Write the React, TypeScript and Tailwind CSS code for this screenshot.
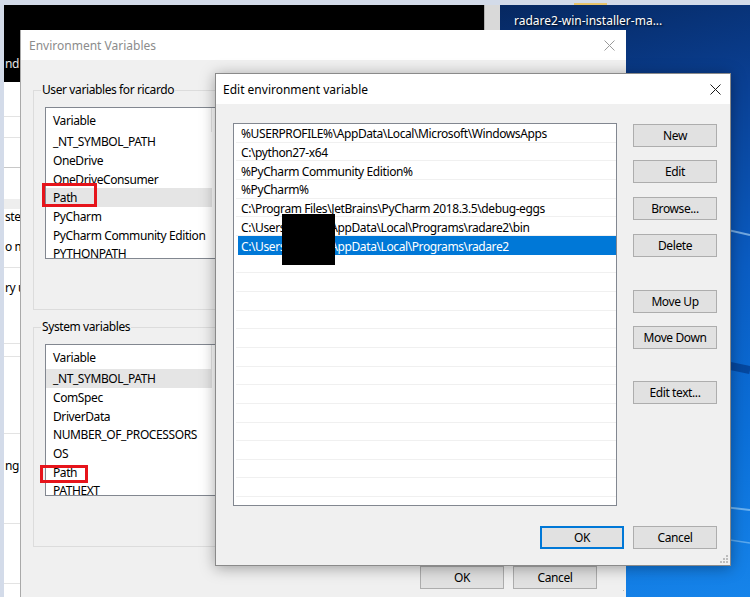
import React from "react";

const FONT = "font-['Segoe_UI','Noto_Sans',sans-serif]";

function CloseX({ color }: { color: string }) {
  return (
    <svg width="11" height="11" viewBox="0 0 11 11">
      <path d="M0.5 0.5 L10.5 10.5 M10.5 0.5 L0.5 10.5" stroke={color} strokeWidth="1" fill="none" />
    </svg>
  );
}

function Btn({ label, focused = false }: { label: string; focused?: boolean }) {
  return (
    <div
      className={
        focused
          ? "flex h-[23px] w-[84px] items-center justify-center border-2 border-[#0078d7] bg-[#e1e1e1] pt-[1px] text-[12px] text-black"
          : "flex h-[23px] w-[84px] items-center justify-center border border-[#adadad] bg-[#e1e1e1] pt-[1px] text-[12px] text-black"
      }
    >
      {label}
    </div>
  );
}

function VarList({ rows, selected }: { rows: string[]; selected: number }) {
  return (
    <div className="h-[152px] w-[560px] overflow-hidden border border-[#828790] bg-white text-[12px] text-black">
      <div className="flex h-[24px] items-center">
        <div className="flex h-full w-[166px] items-center border-r border-[#e5e5e5] pl-[7px] pt-[1px]">Variable</div>
        <div className="pl-[7px]">Value</div>
      </div>
      {rows.map((r, i) => (
        <div
          key={i}
          className={
            i === selected
              ? "flex h-[18.67px] w-[166px] items-center bg-[#e5e5e5] pl-[7px] pt-[2px]"
              : "flex h-[18.67px] items-center pl-[7px] pt-[2px]"
          }
        >
          {r}
        </div>
      ))}
    </div>
  );
}

function GroupBox({ label, children }: { label: string; children: React.ReactNode }) {
  return (
    <div className="relative h-[220px] w-[580px] border border-[#dcdcdc]">
      <span className="absolute -top-[9px] left-[7px] bg-[#f0f0f0] px-[1px] text-[12px] leading-[16px] text-black">{label}</span>
      <div className="ml-[11px] mt-[16px]">{children}</div>
    </div>
  );
}

const pathRows = [
  "%USERPROFILE%\\AppData\\Local\\Microsoft\\WindowsApps",
  "C:\\python27-x64",
  "%PyCharm Community Edition%",
  "%PyCharm%",
  "C:\\Program Files\\JetBrains\\PyCharm 2018.3.5\\debug-eggs",
  "C:\\Users\\ricardo\\AppData\\Local\\Programs\\radare2\\bin",
  "C:\\Users\\ricardo\\AppData\\Local\\Programs\\radare2",
];

export default function App() {
  const editRows: string[] = [...pathRows];
  while (editRows.length < 21) editRows.push("");

  return (
    <div className={`relative h-[597px] w-[750px] overflow-hidden bg-[#d3dbe9] tracking-[-0.4px] ${FONT}`}>
      {/* Desktop wallpaper */}
      <div className="absolute bottom-0 left-[480px] right-0 top-[5px] bg-[linear-gradient(165deg,#06275f_0%,#0a3f92_22%,#0a5cc2_50%,#0b6fd8_75%,#1684ea_100%)]">
        <svg className="absolute inset-0" width="270" height="592" viewBox="0 0 270 592">
          <path d="M160 205 L270 230" stroke="rgba(200,235,255,0.55)" strokeWidth="2" fill="none" />
          <path d="M150 340 L270 365" stroke="rgba(0,40,110,0.5)" strokeWidth="8" fill="none" />
          <path d="M140 490 L270 505" stroke="rgba(200,235,255,0.5)" strokeWidth="2" fill="none" />
          <path d="M150 520 L270 538" stroke="rgba(200,235,255,0.4)" strokeWidth="1.5" fill="none" />
        </svg>
      </div>

      {/* Desktop icon label */}
      <div className="absolute left-[574px] top-[3px] h-[2px] w-[33px] bg-[#e9c46a]" />
      <div className="absolute left-[514px] top-[12px] text-[12px] leading-[18px] tracking-normal text-white [text-shadow:1px_1px_2px_rgba(0,0,0,0.9)]">
        radare2-win-installer-ma...
      </div>

      {/* Background window */}
      <div className="absolute left-[4px] top-[5px] flex h-[600px] w-[496px] flex-col bg-white text-[12px] text-black">
        <div className="relative flex h-[77px] w-full">
          <div className="flex h-full w-[480px] flex-col bg-black pl-[1px] pt-[51px] text-[12px] leading-[16px] text-[#e6e6e6]">nd</div>
          <div className="h-[25px] w-[16px] border-l border-[#b0b0b0] bg-[#d9d9d9]" />
        </div>
        <div className="h-[35px] border-b border-[#e3e3e3]" />
        <div className="h-[21px] border-b border-[#e3e3e3]" />
        <div className="h-[30px] border-b border-[#c8c8c8]" />
        <div className="h-[31px]" />
        <div className="h-[10px] bg-[#eeeeee]" />
        <div className="flex h-[16px] items-center pl-[1px]">ster</div>
        <div className="h-[14px]" />
        <div className="flex h-[16px] items-center pl-[1px]">o ma</div>
        <div className="h-[13px] border-b border-[#e3e3e3]" />
        <div className="h-[12px]" />
        <div className="flex h-[16px] items-center pl-[1px]">ry u</div>
        <div className="h-[48px] border-b border-[#e3e3e3]" />
        <div className="h-[13px] border-b border-[#e3e3e3]" />
        <div className="h-[77px] border-b border-[#e3e3e3]" />
        <div className="h-[24px]" />
        <div className="flex h-[16px] items-center pl-[1px]">ng i</div>
        <div className="h-[50px] border-b border-[#e3e3e3]" />
        <div className="h-[60px] border-b border-[#e3e3e3]" />
      </div>

      {/* Environment Variables window */}
      <div className="absolute left-[20px] top-[30px] flex h-[590px] w-[606px] flex-col border-l border-[#a9a9a9] bg-[#f0f0f0]">
        <div className="flex h-[30px] items-center justify-between bg-white pl-[8px] pr-[11px] pt-[1px]">
          <span className="text-[12px] tracking-normal text-[#8c8c8c]">Environment Variables</span>
          <CloseX color="#9a9a9a" />
        </div>
        <div className="flex flex-col pl-[12px] pt-[30px]">
          <GroupBox label="User variables for ricardo">
            <VarList
              rows={["_NT_SYMBOL_PATH", "OneDrive", "OneDriveConsumer", "Path", "PyCharm", "PyCharm Community Edition", "PYTHONPATH"]}
              selected={3}
            />
          </GroupBox>
          <div className="mt-[17px]">
            <GroupBox label="System variables">
              <VarList
                rows={["_NT_SYMBOL_PATH", "ComSpec", "DriverData", "NUMBER_OF_PROCESSORS", "OS", "Path", "PATHEXT"]}
                selected={0}
              />
            </GroupBox>
          </div>
          <div className="mt-[19px] flex justify-end gap-[9px] pr-[29px]">
            <Btn label="OK" />
            <Btn label="Cancel" />
          </div>
        </div>
        <svg className="absolute left-[598px] top-[560px]" width="6" height="6" viewBox="0 0 6 6">
          <rect x="4" y="0" width="1" height="1" fill="#b5b5b5" />
        </svg>
      </div>

      {/* Red annotation boxes */}
      <div className="absolute left-[42px] top-[183px] h-[24px] w-[55px] border-[3px] border-[#e6141b]" />
      <div className="absolute left-[40px] top-[465px] h-[18px] w-[48px] border-[3px] border-[#e6141b]" />

      {/* Edit environment variable dialog */}
      <div className="absolute left-[215px] top-[73px] flex h-[493px] w-[516px] flex-col border border-[#8a8a8a] bg-[#f0f0f0] shadow-[0_2px_14px_rgba(0,0,0,0.35)]">
        <div className="flex h-[30px] items-center justify-between bg-white pl-[7px] pr-[9px] pt-[1px]">
          <span className="text-[12px] tracking-normal text-black">Edit environment variable</span>
          <CloseX color="#1a1a1a" />
        </div>
        <div className="flex flex-col pl-[17px] pt-[19px]">
          <div className="flex gap-[16px]">
            <div className="h-[383px] w-[384px] overflow-hidden border border-[#828790] bg-white text-[12px] text-black">
              {editRows.map((r, i) => (
                <div
                  key={i}
                  className={
                    i === 6
                      ? "ml-[4px] flex h-[18.67px] items-center bg-[#0078d7] pl-[3px] pt-[3px] text-white"
                      : "ml-[2px] flex h-[18.67px] items-center border-b border-[#f0f0f0] pl-[5px] pt-[3px]"
                  }
                >
                  {r}
                </div>
              ))}
            </div>
            <div className="flex flex-col pt-[1px]">
              <Btn label="New" />
              <div className="mt-[13px]"><Btn label="Edit" /></div>
              <div className="mt-[14px]"><Btn label="Browse..." /></div>
              <div className="mt-[14px]"><Btn label="Delete" /></div>
              <div className="mt-[33px]"><Btn label="Move Up" /></div>
              <div className="mt-[13px]"><Btn label="Move Down" /></div>
              <div className="mt-[32px]"><Btn label="Edit text..." /></div>
            </div>
          </div>
          <div className="mt-[20px] flex justify-end gap-[9px] pr-[13px]">
            <Btn label="OK" focused />
            <Btn label="Cancel" />
          </div>
        </div>
        <svg className="absolute bottom-[2px] right-[2px]" width="9" height="9" viewBox="0 0 9 9">
          <rect x="7" y="1" width="2" height="2" fill="#bdbdbd" />
          <rect x="4" y="4" width="2" height="2" fill="#bdbdbd" />
          <rect x="7" y="4" width="2" height="2" fill="#bdbdbd" />
          <rect x="1" y="7" width="2" height="2" fill="#bdbdbd" />
          <rect x="4" y="7" width="2" height="2" fill="#bdbdbd" />
          <rect x="7" y="7" width="2" height="2" fill="#bdbdbd" />
        </svg>
      </div>

      {/* Redaction */}
      <div className="absolute left-[282px] top-[214px] h-[51px] w-[53px] bg-black" />
    </div>
  );
}
